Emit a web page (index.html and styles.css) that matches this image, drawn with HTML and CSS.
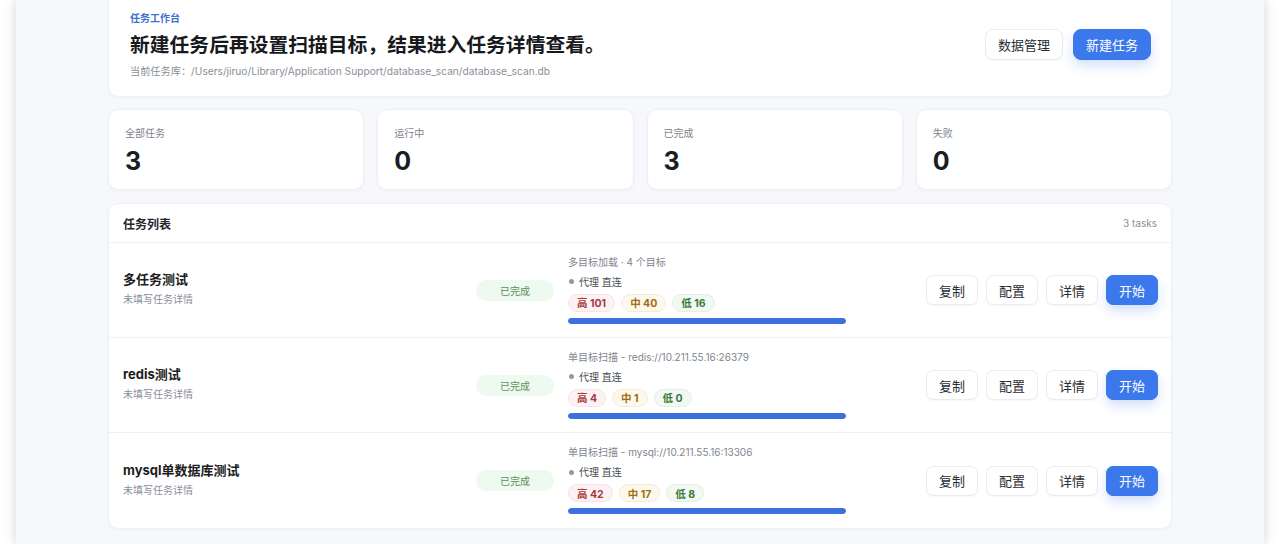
FILE: index.html
```html
<!DOCTYPE html>
<html lang="zh">
<head>
<meta charset="utf-8">
<title>任务工作台</title>
<link rel="stylesheet" href="styles.css">
</head>
<body>
<div class="window">
  <div class="content">
    <section class="card hero">
      <div class="hero-text">
        <div class="eyebrow">任务工作台</div>
        <h1 class="title">新建任务后再设置扫描目标，结果进入任务详情查看。</h1>
        <div class="path">当前任务库：/Users/jiruo/Library/Application Support/database_scan/database_scan.db</div>
      </div>
      <div class="hero-actions">
        <button class="btn btn-lg">数据管理</button>
        <button class="btn btn-lg btn-primary">新建任务</button>
      </div>
    </section>

    <section class="stats">
      <div class="card stat"><div class="stat-label">全部任务</div><div class="stat-value">3</div></div>
      <div class="card stat"><div class="stat-label">运行中</div><div class="stat-value">0</div></div>
      <div class="card stat"><div class="stat-label">已完成</div><div class="stat-value">3</div></div>
      <div class="card stat"><div class="stat-label">失败</div><div class="stat-value">0</div></div>
    </section>

    <section class="card list">
      <div class="list-head">
        <div class="list-title">任务列表</div>
        <div class="list-count">3 tasks</div>
      </div>

      <div class="row">
        <div class="name-col">
          <div class="task-name">多任务测试</div>
          <div class="task-desc">未填写任务详情</div>
        </div>
        <div class="status">已完成</div>
        <div class="info">
          <div class="target">多目标加载 · 4 个目标</div>
          <div class="proxy"><span class="dot"></span>代理 直连</div>
          <div class="chips">
            <span class="chip high">高 101</span>
            <span class="chip mid">中 40</span>
            <span class="chip low">低 16</span>
          </div>
          <div class="bar"><div class="bar-fill" style="width:100%"></div></div>
        </div>
        <div class="actions">
          <button class="btn">复制</button>
          <button class="btn">配置</button>
          <button class="btn">详情</button>
          <button class="btn btn-primary">开始</button>
        </div>
      </div>

      <div class="row">
        <div class="name-col">
          <div class="task-name">redis测试</div>
          <div class="task-desc">未填写任务详情</div>
        </div>
        <div class="status">已完成</div>
        <div class="info">
          <div class="target">单目标扫描 - redis://10.211.55.16:26379</div>
          <div class="proxy"><span class="dot"></span>代理 直连</div>
          <div class="chips">
            <span class="chip high">高 4</span>
            <span class="chip mid">中 1</span>
            <span class="chip low">低 0</span>
          </div>
          <div class="bar"><div class="bar-fill" style="width:100%"></div></div>
        </div>
        <div class="actions">
          <button class="btn">复制</button>
          <button class="btn">配置</button>
          <button class="btn">详情</button>
          <button class="btn btn-primary">开始</button>
        </div>
      </div>

      <div class="row">
        <div class="name-col">
          <div class="task-name">mysql单数据库测试</div>
          <div class="task-desc">未填写任务详情</div>
        </div>
        <div class="status">已完成</div>
        <div class="info">
          <div class="target">单目标扫描 - mysql://10.211.55.16:13306</div>
          <div class="proxy"><span class="dot"></span>代理 直连</div>
          <div class="chips">
            <span class="chip high">高 42</span>
            <span class="chip mid">中 17</span>
            <span class="chip low">低 8</span>
          </div>
          <div class="bar"><div class="bar-fill" style="width:100%"></div></div>
        </div>
        <div class="actions">
          <button class="btn">复制</button>
          <button class="btn">配置</button>
          <button class="btn">详情</button>
          <button class="btn btn-primary">开始</button>
        </div>
      </div>
    </section>
  </div>
</div>
</body>
</html>
```

FILE: styles.css
```css
* { box-sizing: border-box; }
html, body { margin: 0; padding: 0; }
body {
  background: #ffffff;
  font-family: Inter, "Noto Sans CJK SC", sans-serif;
  color: #1f2329;
  height: 544px;
  overflow: hidden;
}
.window {
  margin: 0 16px;
  height: 544px;
  background: #f6f8fc;
  box-shadow: 0 0 12px rgba(0, 0, 0, 0.18);
  overflow: hidden;
}
.content {
  width: 1064px;
  margin: -10px auto 0;
  display: flex;
  flex-direction: column;
  gap: 12px;
}
.card {
  background: #ffffff;
  border: 1px solid #edf0f5;
  border-radius: 10px;
  box-shadow: 0 1px 3px rgba(30, 40, 70, 0.04);
}
.hero {
  height: 107px;
  padding: 1px 20px 0 21px;
  display: flex;
  align-items: center;
  justify-content: space-between;
}
.eyebrow {
  font-size: 10px;
  line-height: 14px;
  color: #3a6fd6;
  font-weight: 600;
}
.title {
  margin: 6px 0 0;
  font-size: 19.8px;
  line-height: 28px;
  font-weight: 700;
  color: #17191d;
}
.path {
  margin-top: 5px;
  font-size: 10.2px;
  line-height: 14px;
  color: #8a8f98;
}
.hero-actions {
  display: flex;
  gap: 10px;
  align-items: center;
  padding-top: 1px;
}
.btn {
  font-family: Inter, "Noto Sans CJK SC", sans-serif;
  font-size: 13px;
  height: 30px;
  width: 52px;
  padding: 0;
  border: 1px solid #eaecf0;
  background: #ffffff;
  color: #2a2d33;
  border-radius: 7px;
  box-shadow: 0 1px 2px rgba(30, 40, 70, 0.04);
}
.btn-lg {
  width: 78px;
  height: 31px;
  border-radius: 8px;
}
.btn-primary {
  background: #3b78ec;
  border-color: #3b78ec;
  color: #ffffff;
  box-shadow: 0 6px 12px rgba(59, 120, 236, 0.22);
}
.stats {
  display: grid;
  grid-template-columns: repeat(4, 1fr);
  gap: 13px;
}
.stat {
  height: 81px;
  padding: 16px 16px 0;
}
.stat-label {
  font-size: 10px;
  line-height: 14px;
  color: #7d828b;
}
.stat-value {
  margin-top: 6px;
  font-size: 25px;
  line-height: 30px;
  font-weight: 700;
  color: #1b1d21;
}
.list { margin-top: 1px; }
.list-head {
  height: 39px;
  padding: 0 14px 0 14px;
  display: flex;
  align-items: center;
  justify-content: space-between;
  border-bottom: 1px solid #eef0f4;
}
.list-title {
  font-size: 12px;
  font-weight: 700;
  color: #23262b;
}
.list-count {
  font-size: 10px;
  color: #8c9099;
}
.row {
  height: 95px;
  padding: 0 13px 0 14px;
  display: grid;
  grid-template-columns: 339px 78px 278px 1fr;
  column-gap: 14px;
  align-items: center;
  border-bottom: 1px solid #eef0f4;
}
.row:last-child { border-bottom: none; }
.name-col { padding-bottom: 4px; }
.task-name {
  font-size: 13px;
  line-height: 18px;
  font-weight: 700;
  color: #1b1d21;
}
.task-desc {
  margin-top: 4px;
  font-size: 10px;
  line-height: 14px;
  color: #8a8f98;
}
.status {
  height: 21px;
  border-radius: 11px;
  background: #eef9ef;
  color: #5b9160;
  font-size: 10px;
  display: flex;
  align-items: center;
  justify-content: center;
}
.info {
  display: flex;
  flex-direction: column;
  padding-bottom: 2px;
}
.target {
  font-size: 10px;
  line-height: 14px;
  color: #80858e;
}
.proxy {
  margin-top: 6px;
  font-size: 10px;
  line-height: 14px;
  color: #4a4e55;
  display: flex;
  align-items: center;
}
.dot {
  width: 5px;
  height: 5px;
  border-radius: 50%;
  background: #8f97a8;
  margin: 0 5px 0 1px;
}
.chips {
  margin-top: 5px;
  display: flex;
  gap: 6px;
}
.chip {
  height: 18px;
  padding: 0 8px;
  border-radius: 9px;
  font-size: 10.5px;
  font-weight: 700;
  display: flex;
  align-items: center;
  border: 1px solid transparent;
}
.chip.high { background: #fcf2f3; border-color: #f6e4e6; color: #a63a3e; }
.chip.mid { background: #fdf8ec; border-color: #f6ecd6; color: #9f6e14; }
.chip.low { background: #f2f9f2; border-color: #e3f0e3; color: #3d7a3f; }
.bar {
  margin-top: 6px;
  height: 6px;
  border-radius: 3px;
  background: #e6ebf5;
  overflow: hidden;
}
.bar-fill {
  height: 100%;
  background: #3b70dd;
  border-radius: 3px;
}
.actions {
  display: flex;
  justify-content: flex-end;
  gap: 8px;
}
```
